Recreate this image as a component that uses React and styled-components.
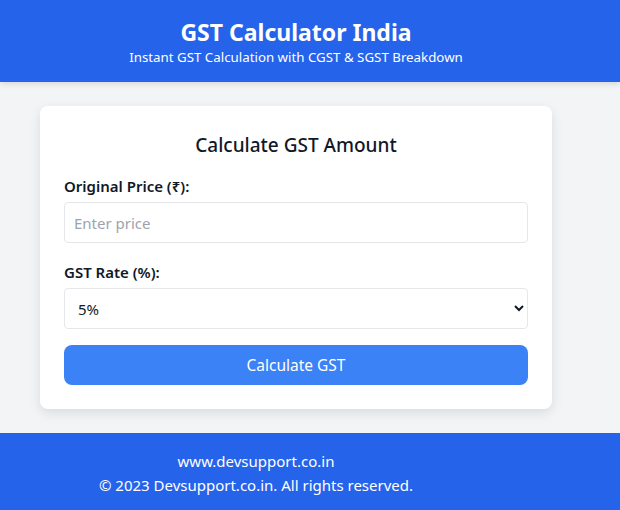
import React, { useState } from 'react';
import styled, { createGlobalStyle } from 'styled-components';

const GlobalStyle = createGlobalStyle`
  * { box-sizing: border-box; }
  html, body { margin: 0; padding: 0; }
  body {
    font-family: "Noto Sans", "Open Sans", sans-serif;
    background: #f3f4f6;
    color: #111827;
    overflow: hidden;
  }
`;

const Page = styled.div`
  width: 620px;
  min-height: 510px;
  display: flex;
  flex-direction: column;
`;

const Header = styled.header`
  background: #2563eb;
  color: #fff;
  height: 82px;
  padding: 17px 28px 0 0;
  text-align: center;
  box-shadow: 0 2px 6px rgba(0, 0, 0, 0.12);
`;

const Title = styled.h1`
  margin: 0;
  font-size: 23px;
  font-weight: 700;
  line-height: 30px;
`;

const Subtitle = styled.p`
  margin: 0;
  font-size: 13.3px;
  line-height: 20px;
`;

const Main = styled.main`
  padding: 24px 68px 24px 40px;
`;

const Card = styled.div`
  background: #fff;
  border-radius: 8px;
  box-shadow: 0 4px 12px rgba(0, 0, 0, 0.1);
  padding: 24px;
`;

const CardTitle = styled.h2`
  margin: 0 0 16px;
  text-align: center;
  font-size: 19px;
  font-weight: 500;
  line-height: 30px;
`;

const Label = styled.label`
  display: block;
  font-size: 15px;
  font-weight: 600;
  line-height: 20px;
  margin-bottom: 6px;
`;

const Field = styled.div`
  margin-bottom: ${({ $gap }) => $gap}px;
`;

const Input = styled.input`
  width: 100%;
  height: 41px;
  border: 1px solid #e5e7eb;
  border-radius: 4px;
  padding: 0 9px;
  font-family: inherit;
  font-size: 15px;
  color: #111827;
  outline: none;
  &::placeholder { color: #9ca3af; }
`;

const Select = styled.select`
  width: 100%;
  height: 41px;
  border: 1px solid #e5e7eb;
  border-radius: 4px;
  padding: 0 9px;
  font-family: inherit;
  font-size: 15px;
  color: #111827;
  background: #fff;
  outline: none;
`;

const Button = styled.button`
  width: 100%;
  height: 40px;
  border: none;
  border-radius: 8px;
  background: #3b82f6;
  color: #fff;
  font-family: inherit;
  font-size: 15.5px;
  cursor: pointer;
`;

const Footer = styled.footer`
  margin-top: auto;
  background: #2563eb;
  color: #fff;
  height: 77px;
  padding: 16px 0 0;
`;

const FooterInner = styled.div`
  width: 512px;
  text-align: center;
  font-size: 15px;
  line-height: 24px;
`;

const FooterLine = styled.p`
  margin: 0;
`;

const rates = ['5%', '12%', '18%', '28%'];

export default function App() {
  const [price, setPrice] = useState('');
  const [rate, setRate] = useState('5%');

  return (
    <>
      <GlobalStyle />
      <Page>
        <Header>
          <Title>GST Calculator India</Title>
          <Subtitle>Instant GST Calculation with CGST &amp; SGST Breakdown</Subtitle>
        </Header>
        <Main>
          <Card>
            <CardTitle>Calculate GST Amount</CardTitle>
            <Field $gap={19}>
              <Label htmlFor="price">Original Price (₹):</Label>
              <Input
                id="price"
                placeholder="Enter price"
                value={price}
                onChange={(e) => setPrice(e.target.value)}
              />
            </Field>
            <Field $gap={16}>
              <Label htmlFor="rate">GST Rate (%):</Label>
              <Select id="rate" value={rate} onChange={(e) => setRate(e.target.value)}>
                {rates.map((r) => (
                  <option key={r} value={r}>{r}</option>
                ))}
              </Select>
            </Field>
            <Button type="button">Calculate GST</Button>
          </Card>
        </Main>
        <Footer>
          <FooterInner>
            <FooterLine>www.devsupport.co.in</FooterLine>
            <FooterLine>© 2023 Devsupport.co.in. All rights reserved.</FooterLine>
          </FooterInner>
        </Footer>
      </Page>
    </>
  );
}
